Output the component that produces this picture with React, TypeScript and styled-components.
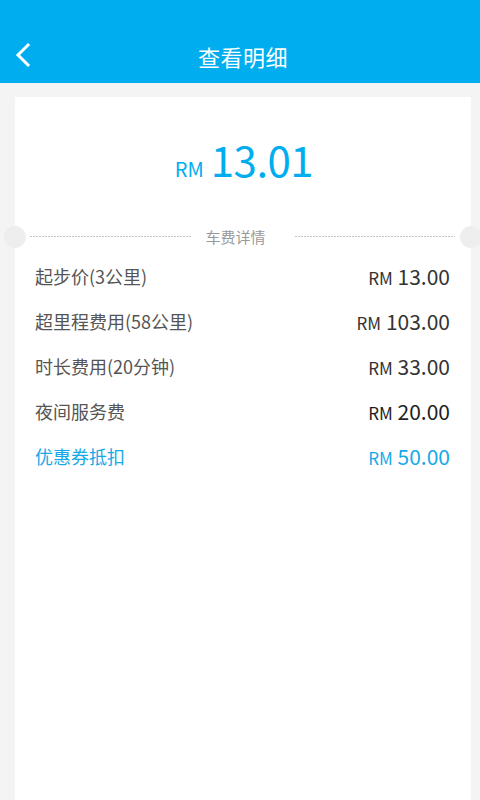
import React from "react";
import styled, { createGlobalStyle } from "styled-components";

const GlobalStyle = createGlobalStyle`
  html, body {
    margin: 0;
    padding: 0;
    background: #f4f4f4;
    font-family: "Noto Sans CJK SC", "Noto Sans", sans-serif;
  }
`;

interface Fee {
  label: string;
  amount: string;
  tone?: "normal" | "strong" | "accent";
}

const fees: Fee[] = [
  { label: "起步价(3公里)", amount: "13.00" },
  { label: "超里程费用(58公里)", amount: "103.00" },
  { label: "时长费用(20分钟)", amount: "33.00" },
  { label: "夜间服务费", amount: "20.00", tone: "strong" },
  { label: "优惠券抵扣", amount: "50.00", tone: "accent" },
];

const BackIcon = () => (
  <svg width="20" height="26" viewBox="0 0 20 26" fill="none">
    <path d="M14 3 L4 13 L14 23" stroke="#fff" strokeWidth="3" strokeLinecap="square" />
  </svg>
);

export default function App() {
  return (
    <Page>
      <GlobalStyle />
      <Header>
        <NavBar>
          <BackButton>
            <BackIcon />
          </BackButton>
          <Title>查看明细</Title>
        </NavBar>
      </Header>
      <Card>
        <Total>
          <Currency>RM</Currency>
          <TotalValue>13.01</TotalValue>
        </Total>
        <Divider>
          <Notch $side="left" />
          <DashLine />
          <DividerLabel>车费详情</DividerLabel>
          <DashLine />
          <Notch $side="right" />
        </Divider>
        <FeeList>
          {fees.map((f) => (
            <FeeRow key={f.label}>
              <FeeLabel $accent={f.tone === "accent"}>{f.label}</FeeLabel>
              <FeeAmount $tone={f.tone || "normal"}>
                <small>RM</small> {f.amount}
              </FeeAmount>
            </FeeRow>
          ))}
        </FeeList>
      </Card>
    </Page>
  );
}

const Page = styled.div`
  min-height: 100vh;
  background: #f4f4f4;
  display: flex;
  flex-direction: column;
`;

const Header = styled.header`
  background: #00aeef;
  padding-top: 28px;
`;

const NavBar = styled.div`
  height: 55px;
  position: relative;
  display: flex;
  align-items: center;
  justify-content: center;
`;

const BackButton = styled.button`
  position: absolute;
  left: 14px;
  top: 14px;
  background: none;
  border: 0;
  padding: 0;
  display: flex;
`;

const Title = styled.h1`
  margin: 0 0 0 6px;
  color: #fff;
  font-size: 22px;
  font-weight: 400;
  letter-spacing: 0.5px;
`;

const Card = styled.main`
  flex: 1;
  margin: 14px 9px 0 15px;
  background: #fff;
  position: relative;
`;

const Total = styled.div`
  padding-top: 37px;
  height: 50px;
  line-height: 50px;
  display: flex;
  justify-content: center;
  align-items: baseline;
  color: #00aeef;
`;

const Currency = styled.span`
  font-size: 20px;
  margin-right: 7px;
  margin-left: 2px;
`;

const TotalValue = styled.span`
  font-size: 42px;
  letter-spacing: -0.5px;
`;

const Divider = styled.div`
  margin-top: 42px;
  height: 22px;
  position: relative;
  display: flex;
  align-items: center;
  padding: 0 16px 0 15px;
`;

const Notch = styled.span<{ $side: "left" | "right" }>`
  position: absolute;
  top: 0;
  ${(p) => (p.$side === "left" ? "left: -11px;" : "right: -11px;")}
  width: 22px;
  height: 22px;
  border-radius: 50%;
  background: #eeeeee;
`;

const DashLine = styled.span`
  flex: 1;
  height: 1px;
  margin-top: -2px;
  background: repeating-linear-gradient(
    to right,
    #c4c4c4 0,
    #c4c4c4 2px,
    transparent 2px,
    transparent 3px
  );
`;

const DividerLabel = styled.span`
  margin: 0 29px 0 15px;
  font-size: 15px;
  color: #999;
  line-height: 22px;
`;

const FeeList = styled.div`
  margin-top: 5px;
  padding: 0 21px 0 20px;
`;

const FeeRow = styled.div`
  height: 45px;
  display: flex;
  align-items: center;
  justify-content: space-between;
`;

const FeeLabel = styled.span<{ $accent: boolean }>`
  font-size: 18px;
  color: ${(p) => (p.$accent ? "#16a9e8" : "#555")};
`;

const FeeAmount = styled.span<{ $tone: "normal" | "strong" | "accent" }>`
  font-size: 21px;
  color: ${(p) =>
    p.$tone === "accent" ? "#16a9e8" : p.$tone === "strong" ? "#1e1e1e" : "#333"};

  small {
    font-size: 17px;
  }
`;
